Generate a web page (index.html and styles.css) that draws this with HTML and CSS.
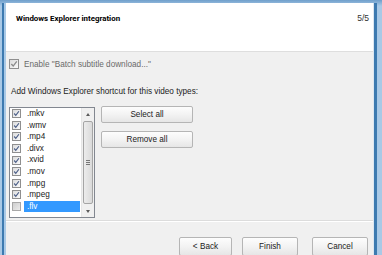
FILE: index.html
```html
<!DOCTYPE html>
<html>
<head>
<meta charset="utf-8">
<link rel="stylesheet" href="styles.css">
</head>
<body>
<div class="dialog">
  <header class="head">
    <h1 class="title">Windows Explorer integration</h1>
    <span class="step">5/5</span>
  </header>
  <main class="main">
    <label class="enable"><span class="cb gray"><svg viewBox="0 0 9 9"><path d="M1.5 4.5 L3.6 6.8 L7.6 1.6" /></svg></span>Enable "Batch subtitle download..."</label>
    <p class="caption">Add Windows Explorer shortcut for this video types:</p>
    <div class="pick">
      <div class="list">
        <ul class="items">
          <li class="item"><span class="cb"><svg viewBox="0 0 9 9"><path d="M1.5 4.5 L3.6 6.8 L7.6 1.6" /></svg></span><span class="ext">.mkv</span></li>
          <li class="item"><span class="cb"><svg viewBox="0 0 9 9"><path d="M1.5 4.5 L3.6 6.8 L7.6 1.6" /></svg></span><span class="ext">.wmv</span></li>
          <li class="item"><span class="cb"><svg viewBox="0 0 9 9"><path d="M1.5 4.5 L3.6 6.8 L7.6 1.6" /></svg></span><span class="ext">.mp4</span></li>
          <li class="item"><span class="cb"><svg viewBox="0 0 9 9"><path d="M1.5 4.5 L3.6 6.8 L7.6 1.6" /></svg></span><span class="ext">.divx</span></li>
          <li class="item"><span class="cb"><svg viewBox="0 0 9 9"><path d="M1.5 4.5 L3.6 6.8 L7.6 1.6" /></svg></span><span class="ext">.xvid</span></li>
          <li class="item"><span class="cb"><svg viewBox="0 0 9 9"><path d="M1.5 4.5 L3.6 6.8 L7.6 1.6" /></svg></span><span class="ext">.mov</span></li>
          <li class="item"><span class="cb"><svg viewBox="0 0 9 9"><path d="M1.5 4.5 L3.6 6.8 L7.6 1.6" /></svg></span><span class="ext">.mpg</span></li>
          <li class="item"><span class="cb"><svg viewBox="0 0 9 9"><path d="M1.5 4.5 L3.6 6.8 L7.6 1.6" /></svg></span><span class="ext">.mpeg</span></li>
          <li class="item sel"><span class="cb empty"></span><span class="ext">.flv</span></li>
        </ul>
        <div class="scroll">
          <span class="arrow up"></span>
          <span class="track"><span class="thumb"><span class="grip"></span></span></span>
          <span class="arrow down"></span>
        </div>
      </div>
      <div class="side">
        <button class="btn">Select all</button>
        <button class="btn">Remove all</button>
      </div>
    </div>
  </main>
  <footer class="foot">
    <button class="btn back">&lt; Back</button>
    <button class="btn finish">Finish</button>
    <button class="btn cancel">Cancel</button>
  </footer>
</div>
</body>
</html>
```
FILE: styles.css
```css
html, body {
  margin: 0;
  padding: 0;
}
body {
  width: 382px;
  height: 255px;
  overflow: hidden;
  background: linear-gradient(#6f9fcb, #a9c9e6 6px, #a9c9e6);
  font-family: "Liberation Sans", Arial, sans-serif;
  font-size: 8.2px;
  color: #222;
  padding-top: 3px;
  box-sizing: border-box;
}
.dialog {
  margin: 0 9px 0 6px;
  height: 252px;
  display: flex;
  flex-direction: column;
  background: #f0f0f0;
  box-shadow: -2px 0 0 #a9c9e6, -4px 0 0 #3d7ab0, 1px 0 0 #dce7f1, 4px 0 0 #3d7ab0;
}
.head {
  height: 49px;
  background: #fff;
  border-bottom: 1px solid #dedede;
  display: flex;
  align-items: flex-start;
  justify-content: space-between;
  padding: 10px 4px 0 10px;
  box-sizing: border-box;
  flex: none;
}
.title {
  margin: 0;
  font-family: Roboto, "Liberation Sans", sans-serif;
  font-size: 7.9px;
  font-weight: bold;
  color: #000;
  line-height: 11px;
}
.step {
  color: #333;
  font-size: 8.5px;
  line-height: 11px;
}
.main {
  flex: none;
  height: 169px;
  padding: 7px 0 0 3px;
  box-sizing: border-box;
  border-bottom: 1px solid #dcdcdc;
}
.enable {
  display: flex;
  align-items: center;
  gap: 5px;
  color: #6a6a6a;
  height: 10px;
}
.cb {
  width: 9px;
  height: 9px;
  border: 1px solid #8f8f8f;
  background: linear-gradient(135deg, #dcdcdc, #fafafa);
  box-sizing: border-box;
  display: inline-flex;
  flex: none;
}
.cb svg {
  width: 100%;
  height: 100%;
  fill: none;
  stroke: #4a5d86;
  stroke-width: 1.5;
}
.cb.gray svg {
  stroke: #8a8a8a;
}
.cb.gray {
  width: 10px;
  height: 10px;
}
.caption {
  margin: 18px 0 0 2px;
  line-height: 10px;
}
.pick {
  display: flex;
  gap: 6px;
  margin-top: 10px;
}
.list {
  width: 86px;
  height: 111px;
  border: 1px solid #828790;
  background: #fff;
  box-sizing: border-box;
  display: flex;
}
.items {
  list-style: none;
  margin: 0;
  padding: 0 0 0 2px;
  flex: 1;
}
.item {
  height: 11.6px;
  display: flex;
  align-items: center;
  gap: 3px;
}
.item .ext {
  padding: 0 3px;
  height: 11.6px;
  line-height: 11.6px;
  flex: 1;
  margin-right: 1px;
}
.item.sel .ext {
  background: #3399ff;
  color: #fff;
}
.cb.empty {
  background: linear-gradient(135deg, #cfcfcf, #ececec);
  border-color: #a8a8a8;
}
.scroll {
  width: 12px;
  display: flex;
  flex-direction: column;
  background: #f0f0f0;
  border-left: 1px solid #e6e6e6;
}
.arrow {
  height: 12px;
  flex: none;
  display: flex;
  align-items: center;
  justify-content: center;
}
.arrow::before {
  content: "";
  border-left: 2.5px solid transparent;
  border-right: 2.5px solid transparent;
}
.arrow.up::before {
  border-bottom: 3px solid #5b5b5b;
}
.arrow.down::before {
  border-top: 3px solid #5b5b5b;
}
.track {
  flex: 1;
  display: flex;
  padding: 1px 0;
}
.thumb {
  flex: 1;
  margin: 0 1px;
  border: 1px solid #a5a5a5;
  border-radius: 2px;
  background: linear-gradient(90deg, #ececec, #dadada);
  display: flex;
  align-items: center;
  justify-content: center;
}
.grip {
  width: 4px;
  height: 5px;
  background: repeating-linear-gradient(#777 0 1px, transparent 1px 2px);
}
.side {
  display: flex;
  flex-direction: column;
  gap: 8px;
  margin-top: -1px;
}
.btn {
  font: inherit;
  color: #222;
  width: 92px;
  height: 17px;
  padding: 0;
  border: 1px solid #b5b5b5;
  border-radius: 2px;
  background: linear-gradient(#fdfdfd, #f3f3f3 50%, #e6e6e6);
}
.foot {
  flex: 1;
  display: flex;
  align-items: flex-start;
  padding: 15px 0 0 173px;
  border-top: 1px solid #ffffff;
}
.foot .btn {
  height: 19px;
}
.back {
  width: 53px;
}
.finish {
  width: 56px;
  margin-left: 10px;
}
.cancel {
  width: 56px;
  margin-left: 14px;
}
```
